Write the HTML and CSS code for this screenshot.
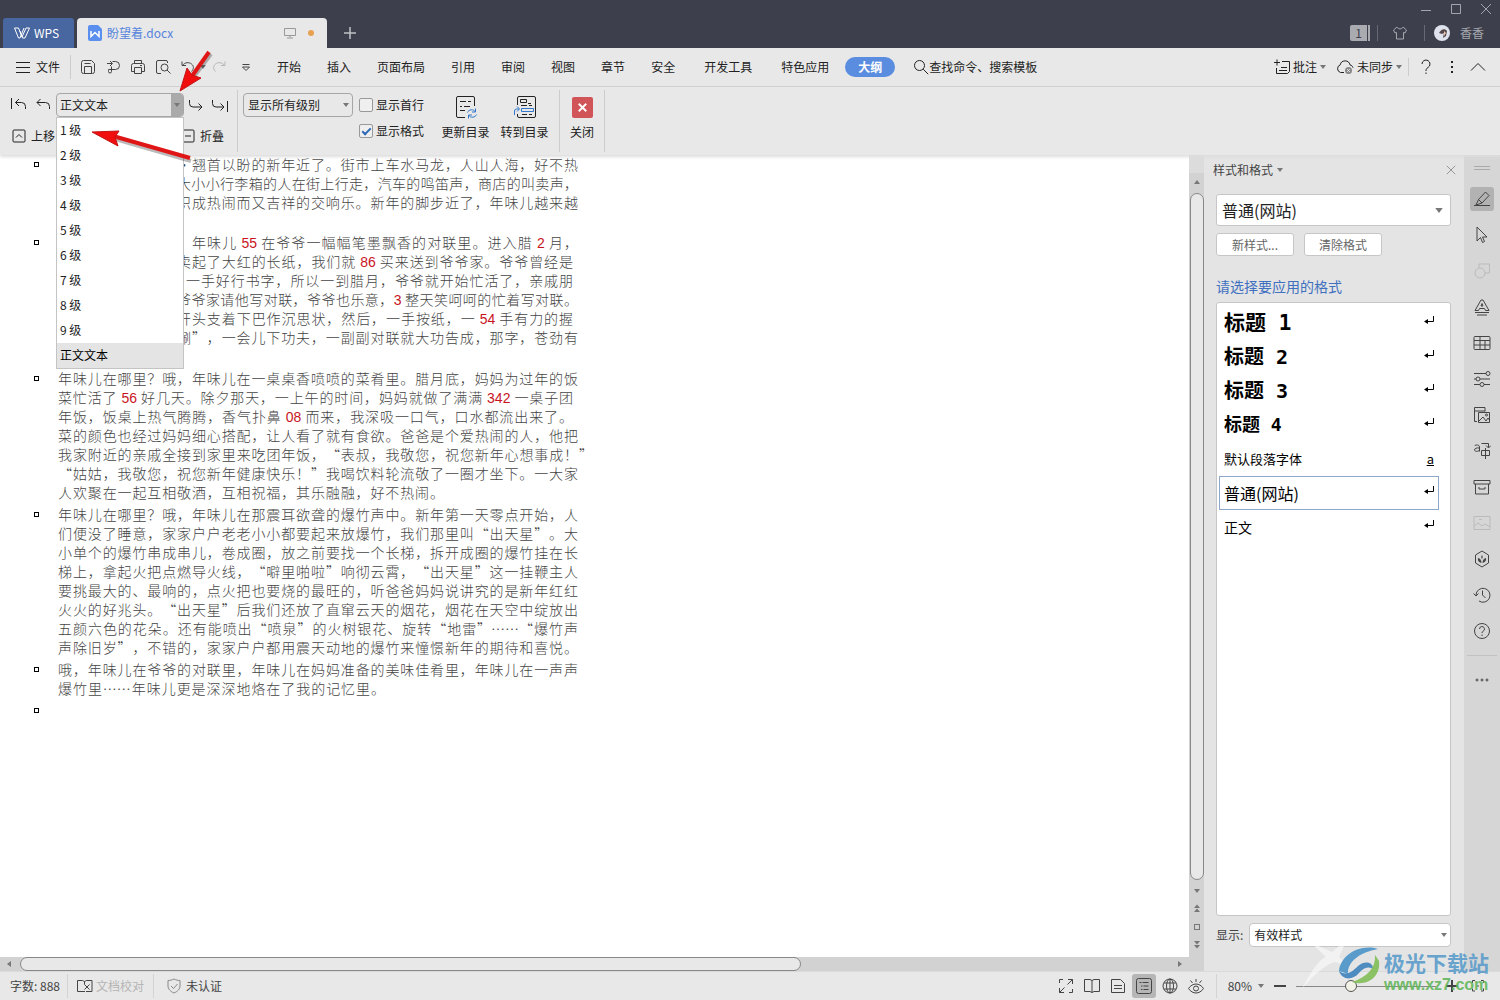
FILE: index.html
```html
<!DOCTYPE html>
<html lang="zh-CN">
<head>
<meta charset="utf-8">
<meta name="viewport" content="width=device-width, initial-scale=1">
<title>盼望着.docx - WPS</title>
<link rel="stylesheet" href="styles.css">
</head>
<body>
<svg class="sprite" aria-hidden="true">
  <symbol id="caret" viewBox="0 0 6 4"><path d="M0 0h6L3 4z" fill="currentColor" stroke="none"/></symbol>
  <symbol id="save" viewBox="0 0 16 16"><path d="M1.500 3.500a2 2 0 0 1 2-2h8l3 3v8a2 2 0 0 1-2 2h-9a2 2 0 0 1-2-2zM4.500 14.500v-7h7v7M4.500 4.500h6"/></symbol>
  <symbol id="export" viewBox="0 0 16 16"><path d="M2 4.500h5M5 2l2.500 2.500L5 7M7.500 2.500h3a4 4 0 0 1 0 8h-7M6.500 7.500v5a1.500 1.500 0 0 1-3 0v-1a1 1 0 0 1 1-1"/></symbol>
  <symbol id="print" viewBox="0 0 16 16"><path d="M4.500 4.500v-3h7v3M4 12.500H1.500v-6a2 2 0 0 1 2-2h9a2 2 0 0 1 2 2v6H12M4.500 8.500h7v6h-7zM10 6.500h2"/></symbol>
  <symbol id="preview" viewBox="0 0 16 16"><path d="M6 14.500H3a1.500 1.500 0 0 1-1.500-1.500V3A1.500 1.500 0 0 1 3 1.500h8A1.500 1.500 0 0 1 12.500 3v1"/><circle cx="9.500" cy="8.500" r="3.500"/><path d="M12 11l3.500 3.500"/></symbol>
  <symbol id="undo" viewBox="0 0 16 16"><path d="M2 2.500v4h4M2.500 6.500C5 3 9 3 11.500 5s2.500 5 0 7.500"/></symbol>
  <symbol id="redo" viewBox="0 0 16 16"><path d="M14 2.500v4h-4M13.500 6.500C11 3 7 3 4.500 5S2 10 4.500 12.500"/></symbol>
  <symbol id="more-down" viewBox="0 0 16 16"><path d="M4.500 5.500h7M4.500 8l3.500 3.500L11.500 8z"/></symbol>
  <symbol id="search" viewBox="0 0 16 16"><circle cx="6.500" cy="6.500" r="5"/><path d="M10.200 10.200l5 5"/></symbol>
  <symbol id="promote" viewBox="0 0 16 16"><path d="M5.500 2L2 5.500 5.500 9M2 5.500h8.500a4 4 0 0 1 4 4V12"/></symbol>
  <symbol id="promote-top" viewBox="0 0 16 16"><path d="M.5 1v11M8 2L4.500 5.500 8 9M4.500 5.500h6a4 4 0 0 1 4 4V12"/></symbol>
  <symbol id="demote" viewBox="0 0 16 16"><path d="M1.500 3v3.500a3.500 3.500 0 0 0 3.500 3.500h9M10.500 6.500L14 10l-3.500 3.500"/></symbol>
  <symbol id="demote-body" viewBox="0 0 16 16"><path d="M.5 3v3.500A3.500 3.500 0 0 0 4 10h8M8.500 6.500L12 10l-3.500 3.500M15.500 4v11"/></symbol>
  <symbol id="move-up" viewBox="0 0 16 16"><rect x="2" y="2" width="12" height="12" rx="1"/><path d="M5 9.500l3-3 3 3"/></symbol>
  <symbol id="collapse" viewBox="0 0 16 16"><rect x="2" y="2" width="12" height="12" rx="1"/><path d="M5 8h6"/></symbol>
  <symbol id="toc-update" viewBox="0 0 24 26"><path d="M11 23.500H4A1.500 1.500 0 0 1 2.500 22V4A1.500 1.500 0 0 1 4 2.500h15A1.500 1.500 0 0 1 20.500 4v8M6 7.500h6m2 0h3M6 12.500h2m2 0h6M6 16.500h5"/><path class="blue" d="M13.500 18.500c1-3 6-4 8-.5M21.500 14.500V18H18M22.500 20.500c-1 3-6 4-8 .5M14.500 24.500V21H18"/></symbol>
  <symbol id="toc-go" viewBox="0 0 24 26"><path d="M4.500 11V4A1.500 1.500 0 0 1 6 2.500h15A1.500 1.500 0 0 1 22.500 4v18a1.500 1.500 0 0 1-1.500 1.500H6A1.500 1.500 0 0 1 4.500 22v-2M7.500 5.500h6v3h-6zM15 9.500h3M8 11.500h6m2 0h3M9 20.500h5m2 0h3"/><path class="blue" d="M8.500 14.500h12v3h-12zM1.500 21v-4a2 2 0 0 1 2-2H6M4 12.500L6.500 15 4 17.500"/></symbol>
  <symbol id="comment" viewBox="0 0 16 16"><path d="M0 3.500h6M3 .5v6M8 2.500h7.500v10l-2 2H2.500V9M7 8.500h6M5 11.500h8"/></symbol>
  <symbol id="cloud" viewBox="0 0 18 16"><path d="M8 13.500H4.500a4 4 0 0 1-.3-7.600 5 5 0 0 1 9.800 0c1.500.3 2.500 1.300 3 2.800"/><circle cx="12.500" cy="11.500" r="3.500" fill="#888" stroke="none"/><path d="M11.300 10.300l2.400 2.400m0-2.400l-2.400 2.400" stroke="#fff"/></symbol>
  <symbol id="help-mark" viewBox="0 0 16 16"><path d="M4 5a4 4 0 1 1 6 3.500c-1.500 1-2 1.500-2 3.500M8 13.500V15"/></symbol>
  <symbol id="dots-v" viewBox="0 0 16 16"><path d="M7 2h2v2H7zM7 7h2v2H7zM7 12h2v2H7z" fill="currentColor" stroke="none"/></symbol>
  <symbol id="fold" viewBox="0 0 16 16"><path d="M1 11.500l7-7 7 7"/></symbol>
  <symbol id="x" viewBox="0 0 12 12"><path d="M1 1l10 10M11 1L1 11"/></symbol>
  <symbol id="enter" viewBox="0 0 10 10"><path d="M9.500 0v5.500H2"/><path d="M0 5.500L4 3v5z" fill="currentColor" stroke="none"/></symbol>
  <symbol id="pen" viewBox="0 0 18 18"><path d="M1 15.500h16M3 15l2.500-5.500 7-7.500 3.500 3.500-7 7.500zM5.500 9.500L9 13"/></symbol>
  <symbol id="cursor" viewBox="0 0 18 18"><path d="M4 1v14l3.500-3.500 2 5 2-1-2-4.500h4.500z"/></symbol>
  <symbol id="shapes" viewBox="0 0 18 18"><path d="M6 6V2h10.500v9H12"/><circle cx="7" cy="11" r="5"/></symbol>
  <symbol id="wordart" viewBox="0 0 18 18"><path d="M2 12.500L8 2h2l6 10.500h-3.500l-1-2h-5l-1 2zM8 8l1-2.500L10 8zM2 14.500h14M4 17h10"/></symbol>
  <symbol id="grid" viewBox="0 0 18 18"><rect x="1" y="2.500" width="16" height="13" rx="1"/><path d="M1 6.500h16M1 11h16M7 2.500v13M12 6.500v9"/></symbol>
  <symbol id="sliders" viewBox="0 0 18 18"><path d="M1 3.500h12M1 9h2m4 0h10M1 14.500h6m4 0h6"/><circle cx="15" cy="3.500" r="2"/><circle cx="5" cy="9" r="2"/><circle cx="9" cy="14.500" r="2"/></symbol>
  <symbol id="gallery" viewBox="0 0 18 18"><path d="M4 15.500H1.500v-14H12v4M1.500 5H12M5.500 6.500h11v10h-11zM6 15l4-4 3 4 2-3 1.500 2"/><circle cx="13.500" cy="9" r="1"/></symbol>
  <symbol id="translate" viewBox="0 0 18 18"><path d="M1.500 4c1-1.500 5-1.500 5 1v4.500M6.500 6c-3-.5-5 .5-5 2s4 2 5 0M8.500 1.500h7v4M13 3.500l2.500 2.500L18 3.500M8.500 8.500h8v5h-8zM12.500 6v11"/></symbol>
  <symbol id="archive" viewBox="0 0 18 18"><path d="M1 2.500h16v3.500H1zM2.500 6v10h13V6M6 9v2h6V9"/></symbol>
  <symbol id="image" viewBox="0 0 18 18"><path d="M1 2.500h16v13H1zM1 12l4-3 4 3 3-2 5 3M6 5.500h3"/></symbol>
  <symbol id="leaf" viewBox="0 0 18 18"><path d="M9 1l6.500 4v8L9 17l-6.500-4V5z"/><path d="M8.500 13C4 12 5 8 5 8c2 .5 3.500 2 3.500 5zM9.500 13C14 12 13 8 13 8c-2 .5-3.500 2-3.500 5zM9 9c-1.500-2 0-4 0-4s1.500 2 0 4z" fill="currentColor" stroke="none"/></symbol>
  <symbol id="history" viewBox="0 0 18 18"><path d="M3 9a7 7 0 1 1 3 6M.5 7.500L3 10l2.500-2.500M9.500 4.500V9l3 3"/></symbol>
  <symbol id="help" viewBox="0 0 18 18"><circle cx="9" cy="9" r="7.500"/><path d="M6.500 7a2.500 2.500 0 1 1 3.500 2.300c-.7.400-1 .8-1 1.700M9 12.500V14"/></symbol>
  <symbol id="dots" viewBox="0 0 18 18"><circle cx="4" cy="9" r="1"/><circle cx="9" cy="9" r="1"/><circle cx="14" cy="9" r="1"/></symbol>
  <symbol id="full" viewBox="0 0 16 16"><path d="M1.500 5V1.500H5M10 1.500h4.500V6M14.500 11v3.500H11M6 14.500H1.500V10M14.500 1.500L9.500 6.500M1.500 14.500l5-5"/></symbol>
  <symbol id="book" viewBox="0 0 16 16"><path d="M.5 1.500h5.500l2 1 2-1h5.500v12H10l-2 1-2-1H.5zM8 2.500v12"/></symbol>
  <symbol id="page" viewBox="0 0 16 16"><path d="M1.500 1.500h9l4 4v9h-13zM4 7.500h8M4 10.500h8"/></symbol>
  <symbol id="outline" viewBox="0 0 16 16"><rect x=".5" y=".5" width="15" height="15" rx="2"/><path d="M3.500 4.500h2m1 0h6M5 8h1.500m1 0h5M5 11.500h1.500m1 0h5"/></symbol>
  <symbol id="globe" viewBox="0 0 16 16"><circle cx="8" cy="8" r="7"/><ellipse cx="8" cy="8" rx="3.500" ry="7"/><path d="M2 5h12M2 11h12M8 1v14"/></symbol>
  <symbol id="eye" viewBox="0 0 16 16"><path d="M.5 10.500c4-6 11-6 15 0-4 6-11 6-15 0zM8 1v3M2.500 2.500l2 2.500M13.500 2.500l-2 2.500"/><circle cx="8" cy="10.500" r="2.500"/></symbol>
  <symbol id="proof" viewBox="0 0 16 16"><path d="M8 13.500H.5v-11h5l2 1 2-1h5.500v11H9M7.500 3.500v3M7.500 6.500l5 5m0-5l-5 5"/></symbol>
  <symbol id="shield" viewBox="0 0 16 16"><path d="M8 1c2 1 4 1.500 6 1.500V8c0 3-2.500 5.500-6 7-3.500-1.500-6-4-6-7V2.500C4 2.500 6 2 8 1zM5 8l2.500 2.500L11.500 6"/></symbol>
  <symbol id="fit" viewBox="0 0 16 16"><path d="M5 2.500H2.500V5M2.500 10.500V13H5M11 2.500h2.500V5M13.500 10.500V13H11M7 8h2"/></symbol>
  <symbol id="double-up" viewBox="0 0 8 8"><path d="M1 4l3-3.500L7 4zM1 8l3-3.500L7 8z" fill="currentColor" stroke="none"/></symbol>
  <symbol id="double-down" viewBox="0 0 8 8"><path d="M1 0l3 3.500L7 0zM1 4l3 3.500L7 4z" fill="currentColor" stroke="none"/></symbol>
</svg>

<div class="app">
  <header class="titlebar">
    <button class="wps-tab" type="button">
      <svg class="wps-logo" viewBox="0 0 16 12"><path d="M.5 1h4l3.500 9L12 1h3.500L11 11H8.500L6 4M.5 1L4.500 11H6l4-10"/></svg>
      WPS
    </button>
    <div class="doc-tab">
      <svg class="doc-logo" viewBox="0 0 14 16"><path d="M2 0h8l4 4v10a2 2 0 0 1-2 2H2a2 2 0 0 1-2-2V2a2 2 0 0 1 2-2z" fill="#5a8ff0"/><path d="M3 6v5.500l4-4 4 4V6" fill="none" stroke="#fff" stroke-width="1.500"/></svg>
      <span class="doc-name">盼望着.docx</span>
      <svg class="screen-icon" viewBox="0 0 12 12"><path d="M.5 1.500h11v7H.5zM6 8.500v2M3 11h6"/></svg>
      <span class="unsaved-dot"></span>
    </div>
    <button class="new-tab" type="button" aria-label="新建"><svg viewBox="0 0 12 12"><path d="M6 0v12M0 6h12"/></svg></button>
    <div class="title-right">
      <div class="window-buttons">
        <button type="button" aria-label="最小化"><svg viewBox="0 0 12 12"><path d="M1 7.500h10"/></svg></button>
        <button type="button" aria-label="最大化"><svg viewBox="0 0 12 12"><path d="M1.500 1.500h9v9h-9z"/></svg></button>
        <button type="button" aria-label="关闭窗口"><svg><use href="#x"/></svg></button>
      </div>
      <div class="account">
        <span class="badge">1</span><span class="badge-bars"></span>
        <svg class="shirt" viewBox="0 0 14 14"><path d="M4 1L.5 4 2 7l1.500-.5V13h7V6.500L12 7l1.500-3L10 1C9 3.500 5 3.500 4 1z"/></svg>
        <span class="title-sep"></span>
        <svg class="avatar" viewBox="0 0 16 16"><circle cx="8" cy="8" r="8" fill="#dfe3ee"/><path d="M5 8c2-4 6-5 8-2l-1 5-3 2 1-5-2 1z" fill="#55474a"/><path d="M10 6l2 2-2 3z" fill="#e8c4b0"/></svg>
        <span>香香</span>
      </div>
    </div>
  </header>

  <nav class="menubar">
    <button class="file-button" type="button"><svg viewBox="0 0 14 14"><path d="M0 2.500h14M0 7.500h14M0 12.500h14"/></svg>文件</button>
    <span class="sep"></span>
    <div class="quick">
      <button type="button" aria-label="保存"><svg><use href="#save"/></svg></button>
      <button type="button" aria-label="输出"><svg><use href="#export"/></svg></button>
      <button type="button" aria-label="打印"><svg><use href="#print"/></svg></button>
      <button type="button" aria-label="打印预览"><svg><use href="#preview"/></svg></button>
      <button type="button" aria-label="撤消"><svg><use href="#undo"/></svg></button>
      <svg class="caret"><use href="#caret"/></svg>
      <button class="dim" type="button" aria-label="恢复"><svg><use href="#redo"/></svg></button>
      <button type="button" aria-label="更多"><svg><use href="#more-down"/></svg></button>
    </div>
    <div class="tabs">
      <a href="#">开始</a><a href="#">插入</a><a href="#">页面布局</a><a href="#">引用</a><a href="#">审阅</a><a href="#">视图</a><a href="#">章节</a><a href="#">安全</a><a class="spaced" href="#">开发工具</a><a class="spaced" href="#">特色应用</a><a class="spaced active" href="#">大纲</a>
    </div>
    <button class="search" type="button"><svg><use href="#search"/></svg>查找命令、搜索模板</button>
    <div class="menu-right">
      <button class="labelled" type="button"><svg><use href="#comment"/></svg>批注<svg class="caret"><use href="#caret"/></svg></button>
      <button class="labelled" type="button"><svg class="wide"><use href="#cloud"/></svg>未同步<svg class="caret"><use href="#caret"/></svg></button>
      <span class="sep short"></span>
      <button class="tool" type="button" aria-label="帮助"><svg><use href="#help-mark"/></svg></button>
      <button class="tool" type="button" aria-label="更多选项"><svg><use href="#dots-v"/></svg></button>
      <button class="tool" type="button" aria-label="折叠功能区"><svg><use href="#fold"/></svg></button>
    </div>
  </nav>

  <section class="ribbon">
    <div class="outline-group">
      <div class="level-row">
        <button type="button" aria-label="提升到标题 1"><svg><use href="#promote-top"/></svg></button>
        <button type="button" aria-label="提升"><svg><use href="#promote"/></svg></button>
        <div class="level-combo">
          <select aria-label="大纲级别"><option>正文文本</option></select>
          <span class="level-arrow"><svg class="caret"><use href="#caret"/></svg></span>
          <ul class="level-menu" role="listbox" aria-label="大纲级别列表">
            <li role="option">1 级</li><li role="option">2 级</li><li role="option">3 级</li><li role="option">4 级</li><li role="option">5 级</li><li role="option">6 级</li><li role="option">7 级</li><li role="option">8 级</li><li role="option">9 级</li><li role="option" class="current" aria-selected="true">正文文本</li>
          </ul>
        </div>
        <button type="button" aria-label="降低"><svg><use href="#demote"/></svg></button>
        <button type="button" aria-label="降低为正文"><svg><use href="#demote-body"/></svg></button>
      </div>
      <div class="move-row">
        <button type="button"><svg><use href="#move-up"/></svg>上移</button>
        <button type="button"><svg><use href="#collapse"/></svg>折叠</button>
      </div>
    </div>
    <div class="show-group">
      <div class="select-wrap show-levels"><select aria-label="显示级别"><option>显示所有级别</option></select><svg class="caret"><use href="#caret"/></svg></div>
      <div class="checks">
        <label><input type="checkbox">显示首行</label>
        <label><input type="checkbox" checked>显示格式</label>
      </div>
      <button class="big" type="button"><svg><use href="#toc-update"/></svg>更新目录</button>
      <button class="big" type="button"><svg><use href="#toc-go"/></svg>转到目录</button>
    </div>
    <div class="close-group">
      <button class="big" type="button"><span class="close-tile"><svg><use href="#x"/></svg></span>关闭</button>
    </div>
  </section>

  <main class="workspace">
    <div class="doc-column">
      <article class="document">
        <p class="first">
          <span class="line indent">·翘首以盼的新年近了。街市上车水马龙，人山人海，好不热</span>
          <span class="line indent">大小小行李箱的人在街上行走，汽车的鸣笛声，商店的叫卖声，</span>
          <span class="line indent">织成热闹而又吉祥的交响乐。新年的脚步近了，年味儿越来越</span>
          <span class="blank"></span>
        </p>
        <p>
          <span class="line indent-wide">年味儿 <b>55</b> 在爷爷一幅幅笔墨飘香的对联里。进入腊 <b>2</b> 月，</span>
          <span class="line indent tight">卖起了大红的长纸，我们就 <b>86</b> 买来送到爷爷家。爷爷曾经是</span>
          <span class="line indent-mid tight">一手好行书字，所以一到腊月，爷爷就开始忙活了，亲戚朋</span>
          <span class="line indent">爷爷家请他写对联，爷爷也乐意，<b>3</b> 整天笑呵呵的忙着写对联。</span>
          <span class="line indent tight">开头支着下巴作沉思状，然后，一手按纸，一 <b>54</b> 手有力的握</span>
          <span class="line indent">唰”，一会儿下功夫，一副副对联就大功告成，那字，苍劲有</span>
          <span class="blank"></span>
        </p>
        <p>
          <span class="line">年味儿在哪里？哦，年味儿在一桌桌香喷喷的菜肴里。腊月底，妈妈为过年的饭</span>
          <span class="line tight">菜忙活了 <b>56</b> 好几天。除夕那天，一上午的时间，妈妈就做了满满 <b>342</b> 一桌子团</span>
          <span class="line tight">年饭，饭桌上热气腾腾，香气扑鼻 <b>08</b> 而来，我深吸一口气，口水都流出来了。</span>
          <span class="line">菜的颜色也经过妈妈细心搭配，让人看了就有食欲。爸爸是个爱热闹的人，他把</span>
          <span class="line hang">我家附近的亲戚全接到家里来吃团年饭，“表叔，我敬您，祝您新年心想事成！”</span>
          <span class="line">“姑姑，我敬您，祝您新年健康快乐！”我喝饮料轮流敬了一圈才坐下。一大家</span>
          <span class="line end-mid">人欢聚在一起互相敬酒，互相祝福，其乐融融，好不热闹。</span>
        </p>
        <p>
          <span class="line">年味儿在哪里？哦，年味儿在那震耳欲聋的爆竹声中。新年第一天零点开始，人</span>
          <span class="line">们便没了睡意，家家户户老老小小都要起来放爆竹，我们那里叫“出天星”。大</span>
          <span class="line">小单个的爆竹串成串儿，卷成圈，放之前要找一个长梯，拆开成圈的爆竹挂在长</span>
          <span class="line">梯上，拿起火把点燃导火线，“噼里啪啦”响彻云霄，“出天星”这一挂鞭主人</span>
          <span class="line">要挑最大的、最响的，点火把也要烧的最旺的，听爸爸妈妈说讲究的是新年红红</span>
          <span class="line">火火的好兆头。“出天星”后我们还放了直窜云天的烟花，烟花在天空中绽放出</span>
          <span class="line">五颜六色的花朵。还有能喷出“喷泉”的火树银花、旋转“地雷”……“爆竹声</span>
          <span class="line">声除旧岁”，不错的，家家户户都用震天动地的爆竹来憧憬新年的期待和喜悦。</span>
        </p>
        <p>
          <span class="line">哦，年味儿在爷爷的对联里，年味儿在妈妈准备的美味佳肴里，年味儿在一声声</span>
          <span class="line end-short">爆竹里……年味儿更是深深地烙在了我的记忆里。</span>
        </p>
        <p><span class="blank"></span></p>
      </article>
      <div class="hscroll">
        <svg class="caret left"><use href="#caret"/></svg>
        <div class="htrack"><div class="hthumb"></div></div>
        <svg class="caret right"><use href="#caret"/></svg>
      </div>
    </div>
    <div class="vscroll">
      <span class="split-grip"></span>
      <svg class="caret up"><use href="#caret"/></svg>
      <div class="vthumb"></div>
      <svg class="caret"><use href="#caret"/></svg>
      <svg class="jump"><use href="#double-up"/></svg>
      <span class="jump-target"></span>
      <svg class="jump"><use href="#double-down"/></svg>
    </div>

    <aside class="pane">
      <div class="pane-title"><button type="button">样式和格式<svg class="caret"><use href="#caret"/></svg></button><button class="pane-close" type="button" aria-label="关闭窗格"><svg><use href="#x"/></svg></button></div>
      <div class="select-wrap style-select"><select aria-label="当前样式"><option>普通(网站)</option></select><svg class="caret big-caret"><use href="#caret"/></svg></div>
      <div class="pane-buttons"><button type="button">新样式...</button><button type="button">清除格式</button></div>
      <h2>请选择要应用的格式</h2>
      <ul class="styles">
        <li class="h1">标题 1<svg><use href="#enter"/></svg></li>
        <li class="h2">标题 2<svg><use href="#enter"/></svg></li>
        <li class="h3">标题 3<svg><use href="#enter"/></svg></li>
        <li class="h4">标题 4<svg><use href="#enter"/></svg></li>
        <li class="default-font">默认段落字体<u>a</u></li>
        <li class="web selected">普通(网站)<svg><use href="#enter"/></svg></li>
        <li class="body-style">正文<svg><use href="#enter"/></svg></li>
      </ul>
      <div class="show-row"><label for="show-styles">显示:</label><div class="select-wrap"><select id="show-styles"><option>有效样式</option></select><svg class="caret"><use href="#caret"/></svg></div></div>
    </aside>

    <div class="sidebar">
      <span class="side-grip"></span>
      <button class="on" type="button" aria-label="样式"><svg><use href="#pen"/></svg></button>
      <button type="button" aria-label="选择"><svg><use href="#cursor"/></svg></button>
      <button class="off" type="button" aria-label="形状"><svg><use href="#shapes"/></svg></button>
      <button type="button" aria-label="艺术字"><svg><use href="#wordart"/></svg></button>
      <button type="button" aria-label="表格"><svg><use href="#grid"/></svg></button>
      <button type="button" aria-label="属性"><svg><use href="#sliders"/></svg></button>
      <button type="button" aria-label="图库"><svg><use href="#gallery"/></svg></button>
      <button type="button" aria-label="翻译"><svg><use href="#translate"/></svg></button>
      <button type="button" aria-label="素材"><svg><use href="#archive"/></svg></button>
      <button class="off" type="button" aria-label="图片"><svg><use href="#image"/></svg></button>
      <button type="button" aria-label="资源"><svg><use href="#leaf"/></svg></button>
      <button type="button" aria-label="历史"><svg><use href="#history"/></svg></button>
      <button type="button" aria-label="帮助中心"><svg><use href="#help"/></svg></button>
      <span class="side-line"></span>
      <button type="button" aria-label="更多工具"><svg><use href="#dots"/></svg></button>
    </div>
  </main>

  <footer class="status">
    <span class="count">字数: 888</span>
    <span class="sep"></span>
    <button class="proof" type="button"><svg><use href="#proof"/></svg><span>文档校对</span></button>
    <span class="sep"></span>
    <button class="cert" type="button"><svg><use href="#shield"/></svg>未认证</button>
    <div class="views">
      <button type="button" aria-label="全屏"><svg><use href="#full"/></svg></button>
      <button type="button" aria-label="阅读"><svg><use href="#book"/></svg></button>
      <button type="button" aria-label="页面"><svg><use href="#page"/></svg></button>
      <button class="on" type="button" aria-label="大纲"><svg><use href="#outline"/></svg></button>
      <button type="button" aria-label="Web"><svg><use href="#globe"/></svg></button>
      <button type="button" aria-label="护眼"><svg><use href="#eye"/></svg></button>
    </div>
    <span class="sep"></span>
    <button class="zoom-value" type="button">80%<svg class="caret"><use href="#caret"/></svg></button>
    <button class="step" type="button" aria-label="缩小"><svg viewBox="0 0 12 12"><path d="M0 6h12"/></svg></button>
    <input class="zoom" type="range" min="0" max="100" value="38" aria-label="显示比例">
    <button class="step" type="button" aria-label="放大"><svg viewBox="0 0 12 12"><path d="M0 6h12M6 0v12"/></svg></button>
    <button class="fit" type="button" aria-label="适合窗口"><svg><use href="#fit"/></svg></button>
  </footer>
</div>

<svg class="arrows" viewBox="0 0 220 170" aria-hidden="true">
  <g class="arrow-shadow"><path d="M211 54L192 79" /><path d="M191 161L115 139"/></g>
  <g class="arrow-line"><path d="M209 52L192 76"/><path d="M190 158L113 136"/></g>
  <path class="arrow-head" d="M180 91l7-23 5 7 9 3zM92 132l27-1-4 6 3 9z"/>
</svg>

<div class="watermark" aria-hidden="true">
  <svg viewBox="0 0 90 56">
    <path d="M0 50C10 30 18 20 24 18L8 3l22 10L45 0l-8 18 10 9-15-4C20 28 10 38 0 50z" fill="#fff" opacity=".6"/>
    <path d="M76 10C56 4 38 18 37 32l9 3c-1-12 12-22 30-25z" fill="#4a94c8"/>
    <path d="M37 32c3 9 13 10 20 2 5-6 12-7 14-3 1-8-8-10-15-4-7 7-12 10-19 5z" fill="#3f83bd"/>
    <path d="M50 43c16 5 29-6 27-21l-4-6c1 13-8 22-23 27z" fill="#82be58"/>
  </svg>
  <div class="watermark-text"><strong>极光下载站</strong><span>www.xz7.com</span></div>
</div>
</body>
</html>
```
FILE: styles.css
```css
*, ::before, ::after { box-sizing: border-box; }
body {
  margin: 0;
  font: 12px/16px "Noto Sans CJK SC", sans-serif;
  color: #333;
  background: #e8e8e8;
  overflow: hidden;
}
button {
  display: flex;
  align-items: center;
  justify-content: center;
  padding: 0;
  border: 0;
  background: none;
  font: inherit;
  color: inherit;
  white-space: nowrap;
}
ul, p, h2 { margin: 0; padding: 0; list-style: none; }
a { color: inherit; text-decoration: none; }
svg { width: 16px; height: 16px; flex: none; fill: none; stroke: currentColor; }
.sprite { position: absolute; width: 0; height: 0; }
.caret { width: 6px; height: 4px; color: #777; }
.blue { stroke: #3377cc; }
.sep { width: 1px; height: 24px; background: #ccc; flex: none; }
.app { display: flex; flex-direction: column; height: 100vh; }
select {
  width: 100%;
  height: 100%;
  padding: 0 4px;
  border: 1px solid #a6a6a6;
  border-radius: 4px;
  appearance: none;
  background: #e8e8e8;
  font: inherit;
  color: #222;
}
.select-wrap { display: grid; align-items: center; }
.select-wrap > * { grid-area: 1 / 1; }
.select-wrap > .caret { justify-self: end; margin-right: 4px; pointer-events: none; }

/* Title bar */
.titlebar { display: flex; align-items: flex-end; height: 48px; flex: none; padding-left: 3px; background: #3d404c; }
.wps-tab { width: 71px; height: 30px; gap: 4px; border-radius: 3px 3px 0 0; background: #4866a0; color: #fff; padding-right: 4px; }
.wps-logo { height: 12px; }
.doc-tab { display: flex; align-items: center; width: 250px; height: 30px; margin-left: 3px; padding: 0 13px 0 11px; border-radius: 4px 4px 0 0; background: #e8e8e8; color: #5584dc; }
.doc-logo { width: 14px; stroke: none; }
.doc-name { flex: 1; margin-left: 5px; }
.screen-icon { width: 12px; height: 12px; color: #999; }
.unsaved-dot { width: 6px; height: 6px; margin-left: 12px; border-radius: 50%; background: #e8a150; }
.new-tab { width: 46px; height: 30px; color: #c0c1c6; }
.new-tab svg { width: 12px; height: 12px; stroke-width: 1.500; }
.title-right { align-self: stretch; display: flex; flex-direction: column; align-items: flex-end; margin-left: auto; color: #a4a6ad; }
.window-buttons { display: flex; height: 18px; gap: 18px; padding-right: 8px; }
.window-buttons svg { width: 12px; height: 12px; }
.account { display: flex; align-items: center; height: 30px; padding-right: 16px; }
.badge { width: 17px; height: 16px; border-radius: 2px 0 0 2px; background: #a9abb0; color: #3d404c; text-align: center; }
.badge-bars { width: 10px; height: 16px; border-left: 2px solid #a9abb0; border-right: 1px solid #666974; margin: 0 15px 0 1px; }
.shirt { width: 14px; height: 14px; }
.title-sep { width: 1px; height: 16px; margin: 0 9px 0 17px; background: #666974; }
.avatar { margin-right: 10px; stroke: none; }

/* Menu bar */
.menubar { display: flex; align-items: center; height: 39px; flex: none; border-bottom: 1px solid #d0d0d0; color: #222; }
.file-button { gap: 6px; margin: 0 10px 0 16px; }
.file-button svg { width: 14px; height: 14px; }
.quick { display: flex; align-items: center; margin-left: 4px; color: #444; }
.quick button { width: 25px; height: 24px; }
.quick .dim { margin-right: 2px; color: #b5b5b5; }
.tabs { display: flex; margin-left: 6px; }
.tabs a { height: 20px; padding: 0 13px; line-height: 20px; white-space: nowrap; }
.tabs .spaced { margin-left: 3px; }
.tabs .active { border-radius: 10px; background: #5a8de0; color: #fff; font-weight: bold; }
.search { margin-left: 18px; }
.menu-right { display: flex; align-items: center; margin-left: auto; padding-right: 9px; }
.labelled { gap: 3px; margin-right: 10px; }
.labelled .wide { width: 18px; }
.labelled + .sep { margin: 0 4px 0 -4px; }
.short { height: 18px; }
.tool { width: 26px; height: 24px; }

/* Ribbon */
.ribbon { display: flex; height: 68px; flex: none; color: #222; box-shadow: 0 2px 3px #ddd; position: relative; z-index: 1; }
.outline-group { width: 238px; margin: 3px 0; padding: 3px 8px 0 11px; border-right: 1px solid #ccc; }
.level-row { display: flex; align-items: center; height: 24px; gap: 8px; }
.level-combo { position: relative; flex: none; width: 128px; height: 24px; margin: 0 -4px 0 -3px; }
.level-arrow { position: absolute; top: 1px; right: 1px; width: 12px; height: 22px; display: flex; align-items: center; justify-content: center; border-radius: 0 3px 3px 0; background: #aaa; pointer-events: none; }
.level-combo select { padding: 0 3px; }
.level-menu { position: absolute; top: 24px; left: 0; width: 128px; border: 1px solid #c4c4c4; background: #fff; z-index: 2; }
.level-menu li { height: 25px; padding-left: 3px; line-height: 24px; }
.level-menu .current { background: #e4e4e4; color: #000; }
.move-row { display: flex; justify-content: space-between; margin-top: 11px; padding-right: 5px; }
.move-row button { gap: 4px; }
.show-group { display: flex; align-items: flex-start; width: 322px; margin: 3px 0; padding: 3px 0 0 5px; border-right: 1px solid #ccc; }
.show-levels { flex: none; width: 110px; height: 24px; }
.checks { display: flex; flex: none; flex-direction: column; gap: 10px; margin: 4px 12px 0 6px; }
.checks label { display: flex; align-items: center; gap: 3px; white-space: nowrap; }
.checks input { appearance: none; width: 14px; height: 14px; margin: 0; border: 1px solid #999; border-radius: 2px; display: grid; place-items: center; background: #efefef; }
.checks input:checked::after { content: ""; width: 9px; height: 5px; border: solid #2d68b5; border-width: 0 0 2px 2px; rotate: -45deg; translate: 0 -1px; }
.big { flex: none; flex-direction: column; width: 59px; gap: 4px; }
.big > svg { width: 24px; height: 26px; margin-top: 1px; }
.close-group { width: 45px; margin: 3px 0; padding-top: 3px; border-right: 1px solid #ccc; }
.close-group .big { width: 44px; }
.close-tile { display: flex; align-items: center; justify-content: center; width: 21px; height: 21px; margin: 4px 0 2px; border-radius: 2px; background: #d15459; color: #fff; }
.close-tile svg { width: 9px; height: 9px; stroke-width: 2.500; }

/* Workspace */
.workspace { display: flex; flex: 1; min-height: 0; }
.doc-column { display: flex; flex-direction: column; flex: 1; min-width: 0; background: #fff; }
.document { flex: 1; min-height: 0; overflow: hidden; padding-left: 34px; font-size: 14px; line-height: 19px; color: #444; font-weight: 300; text-spacing-trim: space-all; }
.document p { position: relative; padding: 0 0 3px 24px; }
.document .first { padding-bottom: 2px; }
.document p::before { content: ""; position: absolute; left: 0; top: 7px; width: 5px; height: 5px; border: 1px solid #000; }
.line { display: block; width: 520px; text-align: justify; text-align-last: justify; white-space: nowrap; }
.line b { font: 14px/1px "Liberation Sans", sans-serif; color: #c8141e; }
.blank { display: block; height: 19px; }
.indent { padding-left: 119px; }
.indent-mid { padding-left: 128px; }
.indent-wide { padding-left: 134px; }
.tight { padding-right: 5px; }
.hang { width: 535px; }
.end-mid { width: 386px; }
.end-short { width: 327px; }
.hscroll { display: flex; align-items: center; height: 14px; flex: none; padding: 0 6px; background: #d2d2d2; }
.htrack { flex: 1; padding: 0 8px; }
.hthumb { width: 68%; height: 14px; border: 1px solid #888; border-radius: 7px; background: #e8e8e8; }
.left { rotate: 90deg; }
.right { rotate: -90deg; }
.up { rotate: 180deg; }
.vscroll { display: flex; flex-direction: column; align-items: center; width: 15px; padding-bottom: 11px; background: #d2d2d2; }
.split-grip { width: 15px; height: 18px; margin-bottom: 7px; background: #dcdcdc; }
.vthumb { flex: 1; width: 14px; margin: 9px 0; border: 1px solid #888; border-radius: 7px; background: #e8e8e8; }
.jump { width: 8px; height: 8px; margin: 11px 0; color: #777; }
.jump-target { width: 6px; height: 6px; margin-top: 1px; border: 1px solid #777; }

/* Styles pane */
.pane { display: flex; flex-direction: column; width: 260px; padding: 7px 13px 24px 12px; background: #e4e4e4; color: #444; }
.pane-title { display: flex; justify-content: space-between; margin: 0 -12px 16px -3px; }
.pane-title button { gap: 4px; }
.pane-close { width: 24px; color: #888; }
.pane-close svg { width: 10px; height: 10px; }
.pane select { border-color: #c6c6c6; background: #fff; }
.style-select { height: 32px; color: #111; font-size: 16px; line-height: 20px; }
.style-select select { padding: 0 5px; border-radius: 3px; }
.select-wrap > .big-caret { width: 8px; height: 5px; margin-right: 8px; }
.pane-buttons { display: flex; gap: 10px; margin: 7px 0 21px; }
.pane-buttons button { width: 78px; height: 23px; border: 1px solid #c6c6c6; border-radius: 3px; background: #fff; color: #666; }
.pane h2 { font-size: 14px; line-height: 18px; font-weight: 400; color: #4070c0; }
.styles { flex: 1; margin: 7px 0; padding: 3px 2px; border: 1px solid #c6c6c6; border-radius: 3px; background: #fff; color: #000; }
.styles li { display: flex; align-items: center; justify-content: space-between; width: 220px; height: 34px; padding: 0 4px; border: 1px solid transparent; }
.styles svg { width: 10px; height: 10px; margin-bottom: 5px; }
.styles .selected { border-color: #8ca8cc; }
.h1, .h2, .h3, .h4 { font-family: "DejaVu Sans Mono", "Noto Sans CJK SC", monospace; font-weight: bold; }
.h1 { font-size: 21px; }
.h2, .h3 { font-size: 20px; }
.h4 { font-size: 18px; }
.default-font { font-size: 13px; }
.web { font-size: 16px; }
.body-style { font-size: 14px; }
.show-row { display: flex; align-items: center; gap: 6px; }
.show-row .select-wrap { flex: 1; height: 24px; }

/* Tool column */
.sidebar { display: flex; flex-direction: column; align-items: center; gap: 12px; width: 36px; padding-top: 11px; background: #d6d6d6; color: #444; }
.side-grip { width: 16px; height: 4px; margin-bottom: 5px; border: solid #aaa; border-width: 1px 0; }
.sidebar button { width: 24px; height: 24px; border-radius: 3px; }
.sidebar svg { width: 18px; height: 18px; }
.sidebar .on { background: #b2b2b2; }
.sidebar .off { color: #bbb; }
.side-line { width: 30px; height: 1px; background: #c2c2c2; }

/* Status bar */
.status { display: flex; align-items: center; height: 29px; flex: none; border-top: 1px solid #dadada; color: #444; }
.count { margin: 0 7px 0 10px; }
.status .sep { background: #d4d4d4; }
.proof { gap: 3px; margin: 0 9px; }
.proof span { color: #b5b5b5; }
.cert { gap: 4px; margin-left: 12px; }
.cert svg { color: #888; }
.views { display: flex; gap: 2px; margin: 0 8px 0 auto; }
.views button { width: 24px; height: 24px; border-radius: 3px; }
.views .on { background: #b6b6b6; }
.zoom-value { gap: 6px; margin: 0 10px 0 11px; }
.step svg { width: 12px; height: 12px; stroke-width: 2; }
.zoom { appearance: none; width: 140px; height: 14px; margin: 0 10px; background: linear-gradient(#888, #888) center / 100% 1px no-repeat; }
.zoom::-webkit-slider-thumb { appearance: none; width: 12px; height: 12px; border: 1px solid #555; border-radius: 50%; background: #f2f2e8; }
.fit { margin: 0 14px 0 12px; }

/* Callout arrows and site mark lying over the window */
.arrows { position: absolute; left: 0; top: 0; width: 220px; height: 170px; z-index: 5; pointer-events: none; }
.arrow-line { stroke: #e01616; stroke-width: 4; }
.arrow-shadow { stroke: #0004; stroke-width: 4; }
.arrow-head { fill: #f00e0e; stroke: #c41414; }
.watermark { position: absolute; right: 10px; bottom: 5px; display: flex; align-items: flex-end; z-index: 5; pointer-events: none; opacity: .9; }
.watermark svg { width: 90px; height: 56px; margin-right: -8px; stroke: none; }
.watermark-text { display: flex; flex-direction: column; width: 106px; }
.watermark strong { font-size: 21px; line-height: 26px; color: #5b9ccb; white-space: nowrap; }
.watermark span { font: bold 16px/20px "Liberation Sans", sans-serif; color: #64b75c; }
```
